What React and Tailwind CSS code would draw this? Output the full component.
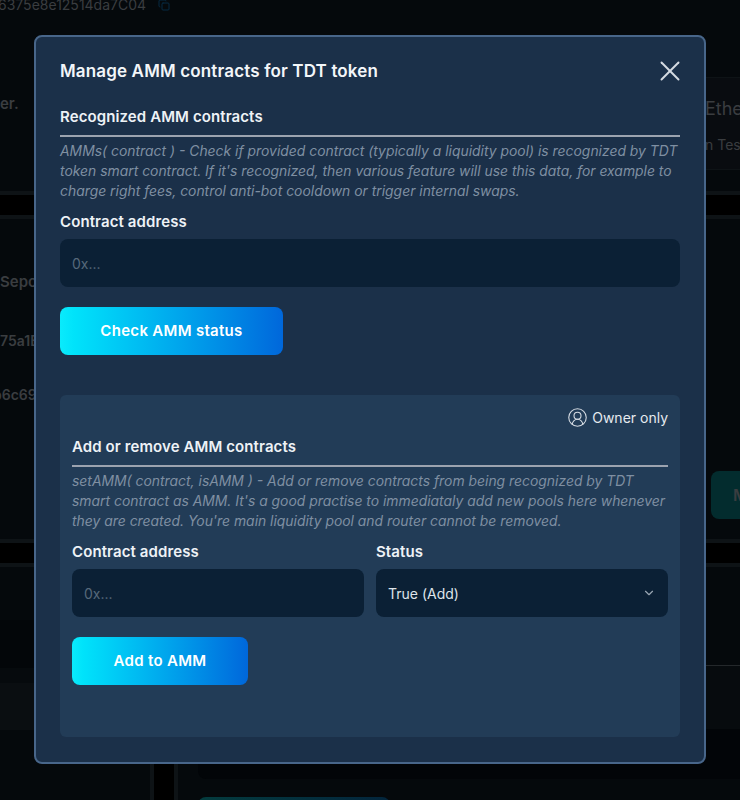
import React from 'react';
import { ChevronDown, CircleUserRound, Copy, X } from 'lucide-react';

const Field = ({ label, children }) => (
    <div className="flex flex-col">
        <label className="mb-[7px] text-[15px] leading-[20px] font-semibold tracking-[0.1px] text-[#eef2f6]">{label}</label>
        {children}
    </div>
);

const GradientButton = ({ width, children }) => (
    <button className={`h-12 ${width} rounded-lg bg-gradient-to-r from-[#0aebfc] to-[#0067db] text-[15px] font-semibold tracking-[0.3px] text-white`}>
        {children}
    </button>
);

const Heading = ({ children }) => (
    <h3 className="border-b-2 border-[#9ca3af] pb-[8px] text-[15px] leading-[20px] font-semibold tracking-[0.1px] text-[#eef2f6]">{children}</h3>
);

const Hint = ({ children }) => (
    <p className="mt-[4px] text-[13.9px] leading-[20px] text-[#7f8fa2] italic">{children}</p>
);

const AddressInput = () => (
    <div className="flex h-12 items-center rounded-lg bg-[#0b2035] px-3 text-[14px] text-[#56687a]">0x...</div>
);

// Page behind the modal, dimmed
const BackgroundPage = () => (
    <div className="flex h-[800px] flex-col overflow-hidden bg-black text-[#3a3d40]">
        <section className="h-[195px] shrink-0 overflow-hidden border-b-4 border-[#0e1316] bg-[#05090c]">
            <div className="flex items-center gap-3 text-[14px] leading-[14px] -mt-[2px]">
                <span className="ml-[-2px]">6375e8e12514da7C04</span>
                <Copy size={12} className="text-[#072a42]" />
            </div>
            <div className="flex items-start justify-between">
                <span className="mt-[81px] text-[15px] font-semibold">er.</span>
                <div className="mt-[65px] h-[93px] w-[35px] overflow-hidden border-y border-[#0e1316] bg-[#090c10] pt-[18px] whitespace-nowrap">
                    <div className="text-[18px] leading-[26px]">Ethe</div>
                    <div className="mt-[13px] text-[14px] leading-[20px]">n Tes</div>
                </div>
            </div>
        </section>
        <section className="mt-5 h-[328px] shrink-0 border-y-4 border-[#0e1316] bg-[#05090c]">
            <div className="mt-[53px] text-[15px] leading-[20px] font-semibold">Sepo</div>
            <div className="mt-[39px] text-[14px] leading-[20px] font-semibold">75a1E</div>
            <div className="mt-[34px] ml-[-7px] text-[14px] leading-[20px] font-semibold">b6c69</div>
            <div className="mt-[66px] ml-auto flex h-12 w-[29px] items-center overflow-hidden rounded-l-lg bg-[#032c2e] pl-[22px] font-semibold">M</div>
        </section>
        <section className="mt-5 flex min-h-0 flex-1 border-t-4 border-[#0e1316]">
            <div className="w-[154px] shrink-0 border-r-4 border-[#0e1316] bg-[#05090c] pt-[53px]">
                <div className="h-12 bg-[#030609]" />
                <div className="h-[15px] bg-[#060a0d]" />
                <div className="h-[47px] bg-[#0a0e11]" />
            </div>
            <div className="w-5 shrink-0" />
            <div className="flex-1 border-l-4 border-[#0e1316] bg-[#05090c] pt-[98px]">
                <div className="h-px bg-[#24282b]" />
                <div className="ml-5 h-[63px] bg-[#070b0e]" />
                <div className="ml-5 h-[50px] rounded-bl-lg bg-[#020508]" />
                <div className="mt-[18px] ml-5 h-8 w-[192px] rounded-lg bg-gradient-to-r from-[#043c3e] to-[#03253c]" />
            </div>
        </section>
    </div>
);

const App = () => {
    return (
        <div className="relative h-[800px] overflow-hidden font-['Inter',sans-serif]">
            <BackgroundPage />

            {/* MODAL */}
            <div className="absolute top-[35px] left-[34px] h-[729px] w-[672px] rounded-lg border-2 border-[#48668a] bg-[#1b3049] px-6 pt-5">
                <div className="flex items-center justify-between">
                    <h2 className="text-[17px] leading-[28px] font-semibold tracking-[0.15px] text-[#f3f6f9]">Manage AMM contracts for TDT token</h2>
                    <X size={34} strokeWidth={1.35} className="-my-2 -mr-[7px] text-[#d5dbe2]" />
                </div>

                <div className="mt-[22px]">
                    <Heading>Recognized AMM contracts</Heading>
                    <Hint>
                        AMMs( contract ) - Check if provided contract (typically a liquidity pool) is recognized by TDT
                        token smart contract. If it's recognized, then various feature will use this data, for example to
                        charge right fees, control anti-bot cooldown or trigger internal swaps.
                    </Hint>
                </div>

                <div className="mt-[11px]">
                    <Field label="Contract address">
                        <AddressInput />
                    </Field>
                </div>

                <div className="mt-5">
                    <GradientButton width="w-[223px]">Check AMM status</GradientButton>
                </div>

                {/* OWNER PANEL */}
                <div className="mt-10 h-[342px] rounded-md bg-[#223c57] px-3 pt-3">
                    <div className="flex items-center justify-end gap-1 text-[14px] leading-5 text-[#e6eaef]">
                        <CircleUserRound size={21} strokeWidth={1.25} className="text-[#d5dbe2]" />
                        <span>Owner only</span>
                    </div>
                    <div className="mt-[9px]">
                        <Heading>Add or remove AMM contracts</Heading>
                        <Hint>
                            setAMM( contract, isAMM ) - Add or remove contracts from being recognized by TDT
                            smart contract as AMM. It's a good practise to immediataly add new pools here whenever
                            they are created. You're main liquidity pool and router cannot be removed.
                        </Hint>
                    </div>
                    <div className="mt-[11px] grid grid-cols-2 gap-3">
                        <Field label="Contract address">
                            <AddressInput />
                        </Field>
                        <Field label="Status">
                            <div className="flex h-12 items-center justify-between rounded-lg bg-[#0b2035] px-3 text-[14px] text-[#dfe4ea]">
                                <span>True (Add)</span>
                                <ChevronDown size={14} className="text-[#9aa6b3]" />
                            </div>
                        </Field>
                    </div>
                    <div className="mt-5">
                        <GradientButton width="w-[176px]">Add to AMM</GradientButton>
                    </div>
                </div>
            </div>
        </div>
    );
};

export default App;
